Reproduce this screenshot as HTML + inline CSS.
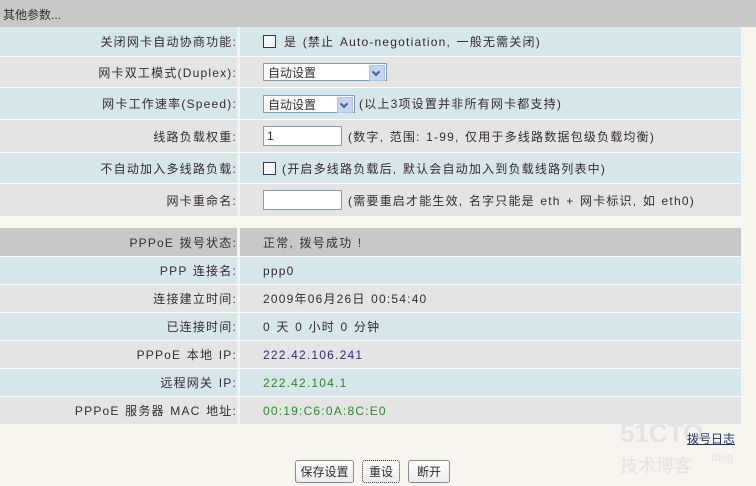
<!DOCTYPE html><html><head><meta charset="utf-8"><style>
body{margin:0;width:756px;height:486px;background:#f7f5ee;font-family:"Liberation Sans","Noto Sans CJK SC",sans-serif;font-size:12px;color:#352a35;position:relative;overflow:hidden;letter-spacing:1.2px;word-spacing:1px}
.r{position:absolute;left:0;width:741px;border-bottom:1px solid #fafafa}
.c{background:#d7e6e8}.g{background:#e5e4e4}.h{background:#c9c8c8}
.l{position:absolute;left:0;width:237px;text-align:right;top:0;bottom:0;display:flex;align-items:center;justify-content:flex-end;border-right:3px solid #f2f2f2;white-space:nowrap}
.v{position:absolute;left:263px;top:0;bottom:0;display:flex;align-items:center;white-space:pre}
.cb{display:inline-block;width:11px;height:11px;border:1px solid #2b3b52;background:#f4f4f4;margin-right:8px}
.in{display:inline-block;width:74px;height:18px;border:1px solid #7f9db9;background:#fff;margin-right:6px;line-height:18px;padding-left:3px;box-sizing:content-box}
.sel{display:inline-block;height:18px;border:1px solid #7f9db9;background:#fff;position:relative;line-height:18px;padding-left:4px;margin-right:4px;box-sizing:border-box;letter-spacing:0}
.sel i{position:absolute;right:1px;top:1px;width:14px;height:14px;background:#c4d4f4;border:1px solid #b0c4ea}
.sel i:after{content:"";position:absolute;left:3px;top:3px;width:4px;height:4px;border-right:2px solid #4d6185;border-bottom:2px solid #4d6185;transform:rotate(45deg)}
.btn{position:absolute;top:460px;height:21px;border:1px solid #8a8a8a;border-radius:3px;background:linear-gradient(#fff,#ececec);font-size:12px;display:flex;align-items:center;justify-content:center;letter-spacing:0}
</style></head><body>
<div class="r h" style="top:0;height:27px;width:756px;border:0"><div style="position:absolute;left:3px;top:6px;letter-spacing:0">其他参数...</div></div>
<div class="r c" style="top:27px;height:29px"><div class="l">关闭网卡自动协商功能:</div><div class="v"><span class="cb"></span>是 (禁止 Auto-negotiation, 一般无需关闭)</div></div>
<div class="r g" style="top:57px;height:30px"><div class="l">网卡双工模式(Duplex):</div><div class="v"><span class="sel" style="width:124px">自动设置<i></i></span></div></div>
<div class="r c" style="top:88px;height:31px"><div class="l">网卡工作速率(Speed):</div><div class="v"><span class="sel" style="width:92px">自动设置<i></i></span>(以上3项设置并非所有网卡都支持)</div></div>
<div class="r g" style="top:120px;height:32px"><div class="l">线路负载权重:</div><div class="v"><span class="in">1</span>(数字, 范围: 1-99, 仅用于多线路数据包级负载均衡)</div></div>
<div class="r c" style="top:153px;height:30px"><div class="l">不自动加入多线路负载:</div><div class="v"><span class="cb" style="margin-right:6px"></span>(开启多线路负载后, 默认会自动加入到负载线路列表中)</div></div>
<div class="r g" style="top:184px;height:32px"><div class="l">网卡重命名:</div><div class="v"><span class="in"></span>(需要重启才能生效, 名字只能是 eth + 网卡标识, 如 eth0)</div></div>
<div class="r h" style="top:228px;height:28px"><div class="l">PPPoE 拨号状态:</div><div class="v">正常, 拨号成功 !</div></div>
<div class="r c" style="top:257px;height:27px"><div class="l">PPP 连接名:</div><div class="v">ppp0</div></div>
<div class="r g" style="top:285px;height:27px"><div class="l">连接建立时间:</div><div class="v">2009年06月26日 00:54:40</div></div>
<div class="r c" style="top:313px;height:27px"><div class="l">已连接时间:</div><div class="v">0 天 0 小时 0 分钟</div></div>
<div class="r g" style="top:341px;height:27px"><div class="l">PPPoE 本地 IP:</div><div class="v" style="color:#2a2a8a">222.42.106.241</div></div>
<div class="r c" style="top:369px;height:27px"><div class="l">远程网关 IP:</div><div class="v" style="color:#2a8a2a">222.42.104.1</div></div>
<div class="r g" style="top:397px;height:27px;border:0"><div class="l">PPPoE 服务器 MAC 地址:</div><div class="v" style="color:#2a8a2a">00:19:C6:0A:8C:E0</div></div>
<div style="position:absolute;left:620px;top:418px;font-size:26px;font-weight:bold;color:#e6e4de;letter-spacing:0">51CTO</div>
<div style="position:absolute;left:620px;top:452px;font-size:18px;color:#e6e4de;letter-spacing:0">技术博客</div>
<div style="position:absolute;left:711px;top:452px;font-size:11px;color:#e6e4de;letter-spacing:0">Blog</div>
<div style="position:absolute;left:687px;top:430px;color:#1a3a6a;text-decoration:underline;letter-spacing:0">拨号日志</div>
<div class="btn" style="left:295px;width:57px">保存设置</div>
<div class="btn" style="left:362px;width:36px;border:1px dotted #333">重设</div>
<div class="btn" style="left:408px;width:40px">断开</div>
</body></html>
